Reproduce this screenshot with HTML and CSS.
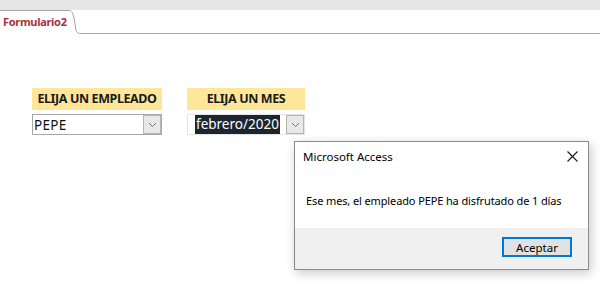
FILE: index.html
```html
<!DOCTYPE html>
<html lang="es">
<head>
    <meta charset="UTF-8">
    <title>Formulario2</title>
    <link rel="stylesheet" href="styles.css">
</head>
<body>
    <div class="topband"></div>
    <div class="tabbar">
        <div class="tab">Formulario2</div>
        <svg class="tab-curve" width="13" height="24" viewBox="0 0 13 24">
            <path d="M0 0.5 C4 0.5 4 1 6 8 L8 20 C9 23 10 23.5 13 23.5" fill="none" stroke="#a6a6a6" stroke-width="1"/>
        </svg>
        <div class="tab-rest"></div>
    </div>

    <div class="form">
        <div class="field field-emp">
            <div class="label">ELIJA UN EMPLEADO</div>
            <div class="combo">
                <span class="combo-text">PEPE</span>
                <span class="combo-btn"><svg width="9" height="6" viewBox="0 0 9 6"><path d="M1 1 L4.5 4.5 L8 1" fill="none" stroke="#707070" stroke-width="1"/></svg></span>
            </div>
        </div>
        <div class="field field-mes">
            <div class="label">ELIJA UN MES</div>
            <div class="combo combo-plain">
                <span class="combo-text selected">febrero/2020</span>
                <span class="combo-btn"><svg width="9" height="6" viewBox="0 0 9 6"><path d="M1 1 L4.5 4.5 L8 1" fill="none" stroke="#707070" stroke-width="1"/></svg></span>
            </div>
        </div>
    </div>

    <div class="dialog">
        <div class="dialog-title">
            <span>Microsoft Access</span>
            <svg class="close" width="11" height="11" viewBox="0 0 11 11"><path d="M0.5 0.5 L10.5 10.5 M10.5 0.5 L0.5 10.5" stroke="#1a1a1a" stroke-width="1.1"/></svg>
        </div>
        <div class="dialog-msg">Ese mes, el empleado PEPE ha disfrutado de 1 días</div>
        <div class="dialog-foot">
            <button class="ok">Aceptar</button>
        </div>
    </div>
</body>
</html>
```

FILE: styles.css
```css
*{
    margin: 0;
    padding: 0;
    box-sizing: border-box;
}
body{
    font-family: "Noto Sans", "Open Sans", sans-serif;
    width: 600px;
    height: 300px;
    background-color: white;
    position: relative;
    overflow: hidden;
}

.topband {
    height: 10px;
    background-color: #e6e6e6;
}
.tabbar {
    display: flex;
    height: 24px;
}
.tab {
    width: 68px;
    border-top: 1px solid #a6a6a6;
    padding: 3px 0 0 3px;
    font-size: 11px;
    font-weight: bold;
    color: #a8303a;
    letter-spacing: -0.3px;
}
.tab-curve {
    display: block;
}
.tab-rest {
    flex: 1;
    border-bottom: 1px solid #a6a6a6;
}

.form {
    display: flex;
    gap: 25px;
    padding: 54px 0 0 32px;
}
.field {
    display: flex;
    flex-direction: column;
    gap: 4px;
}
.field-emp { width: 130px; }
.field-mes { width: 118px; }

.label {
    height: 22px;
    background-color: #ffe699;
    font-size: 12.5px;
    font-weight: bold;
    color: #1a1a1a;
    text-align: center;
    line-height: 22px;
    letter-spacing: -0.4px;
}

.combo {
    height: 21px;
    border: 1px solid #a8a8a8;
    display: flex;
    align-items: center;
    justify-content: space-between;
    padding-left: 1px;
}
.combo-plain {
    border-color: #e4e4e4;
    padding-left: 7px;
}
.combo-text {
    font-size: 13.5px;
    color: #111;
    letter-spacing: 0.3px;
}
.selected {
    background-color: #1c2631;
    color: white;
    font-size: 13.5px;
    line-height: 19px;
    padding: 0 1px;
    letter-spacing: 0;
}
.combo-btn {
    width: 18px;
    height: 19px;
    background-color: #e8e8e8;
    border: 1px solid #b5b5b5;
    display: flex;
    align-items: center;
    justify-content: center;
}

.dialog {
    position: absolute;
    left: 294px;
    top: 141px;
    width: 295px;
    height: 129px;
    border: 1px solid #8a8a8a;
    background-color: white;
    box-shadow: 2px 3px 10px rgba(0, 0, 0, 0.22);
    display: flex;
    flex-direction: column;
}
.dialog-title {
    height: 29px;
    display: flex;
    align-items: center;
    justify-content: space-between;
    padding: 0 10px 0 8px;
    font-size: 11.5px;
    color: #000;
}
.dialog-msg {
    flex: 1;
    padding: 22px 0 0 11px;
    font-size: 11px;
    letter-spacing: -0.12px;
    color: #000;
}
.dialog-foot {
    height: 41px;
    background-color: #f0f0f0;
    display: flex;
    justify-content: flex-end;
    padding: 9px 16px 0 0;
}
.ok {
    width: 70px;
    height: 20px;
    background-color: #e1e1e1;
    border: 2px solid #0078d7;
    font-family: "Noto Sans", "Open Sans", sans-serif;
    font-size: 11.5px;
    color: #000;
}
```
